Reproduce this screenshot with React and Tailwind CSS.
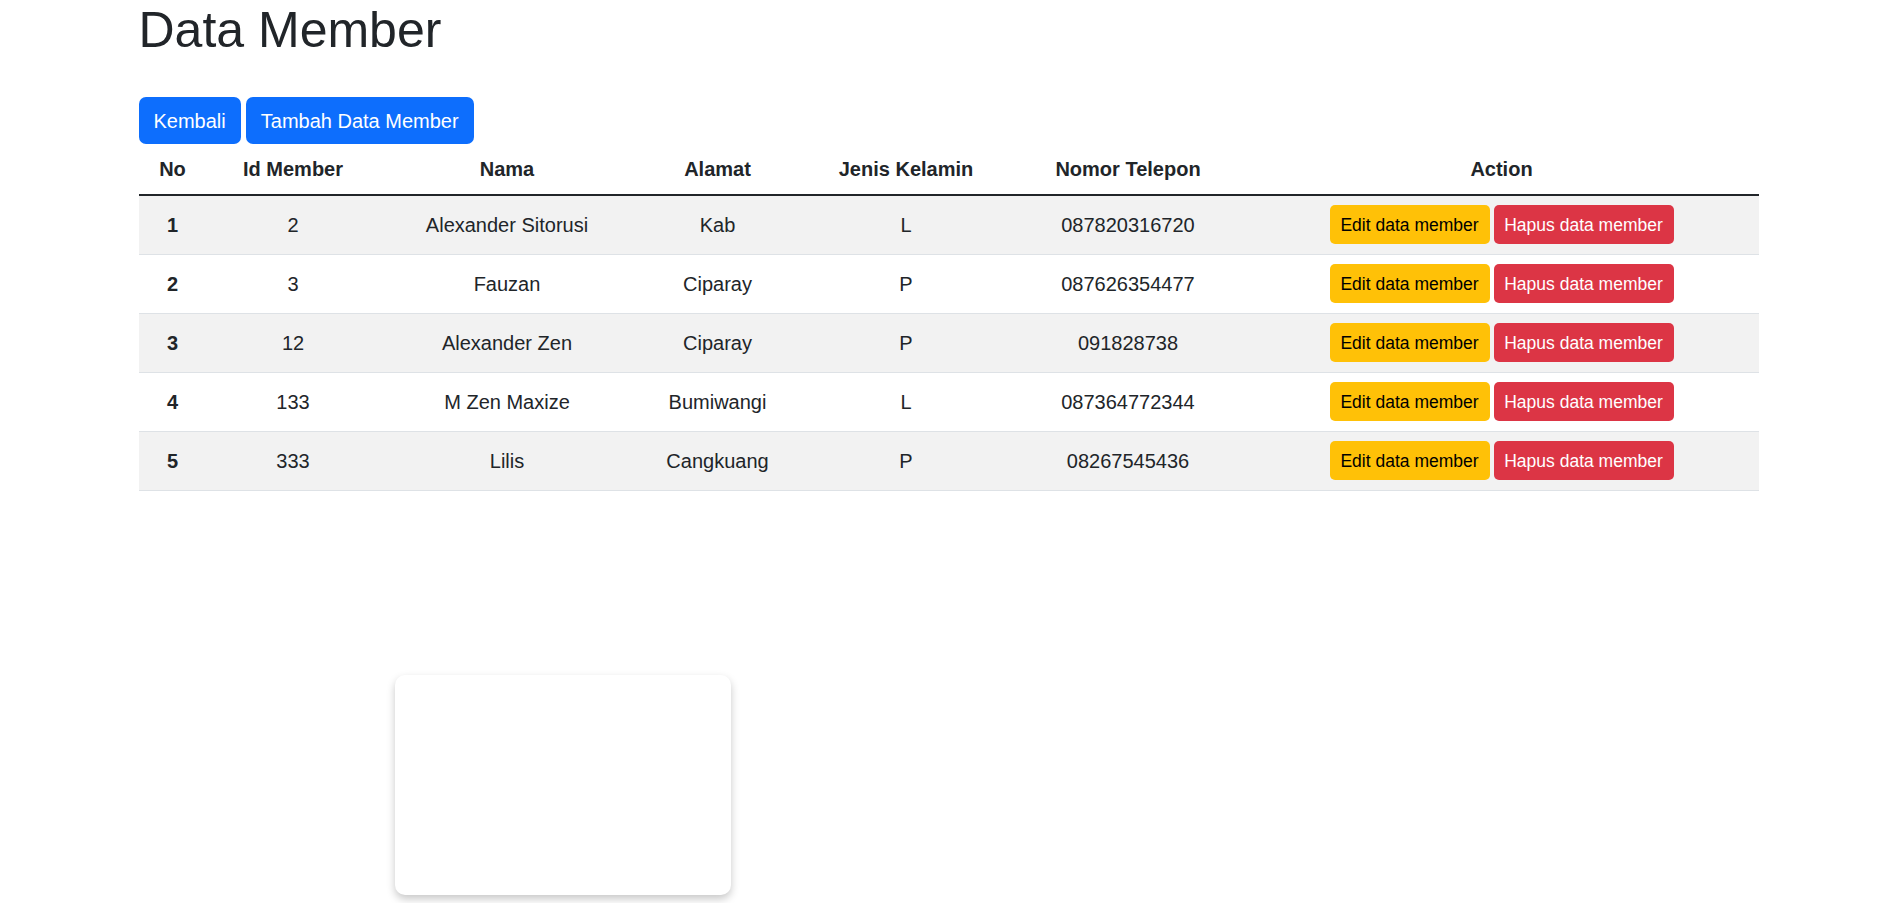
/**
 * Data Member page
 *
 * @description Member list table with edit / delete actions
 */

import React from 'react';

const MEMBERS = [
  { no: 1, id: '2', nama: 'Alexander Sitorusi', alamat: 'Kab', jk: 'L', telp: '087820316720' },
  { no: 2, id: '3', nama: 'Fauzan', alamat: 'Ciparay', jk: 'P', telp: '087626354477' },
  { no: 3, id: '12', nama: 'Alexander Zen', alamat: 'Ciparay', jk: 'P', telp: '091828738' },
  { no: 4, id: '133', nama: 'M Zen Maxize', alamat: 'Bumiwangi', jk: 'L', telp: '087364772344' },
  { no: 5, id: '333', nama: 'Lilis', alamat: 'Cangkuang', jk: 'P', telp: '08267545436' },
];

const HEADERS = ['No', 'Id Member', 'Nama', 'Alamat', 'Jenis Kelamin', 'Nomor Telepon', 'Action'];

function App() {
  return (
    <div className="relative min-h-[903px] bg-white text-[#212529] font-['Liberation_Sans',Arial,sans-serif] text-[20px] leading-[30px]">
      <div className="mx-auto w-[1650px] px-[15px]">
        <h1 className="text-[50px] leading-[60px] font-normal">Data Member</h1>

        {/* Top buttons */}
        <div className="flex gap-[5px] mt-[37px]">
          <button className="h-[47px] px-[15px] rounded-[7px] bg-[#0d6efd] text-white text-[20px]">
            Kembali
          </button>
          <button className="h-[47px] px-[15px] rounded-[7px] bg-[#0d6efd] text-white text-[20px]">
            Tambah Data Member
          </button>
        </div>

        {/* Table */}
        <table className="w-[1620px] table-fixed border-collapse text-center">
          <colgroup>
            <col className="w-[68px]" />
            <col className="w-[173px]" />
            <col className="w-[255px]" />
            <col className="w-[166px]" />
            <col className="w-[211px]" />
            <col className="w-[233px]" />
            <col className="w-[514px]" />
          </colgroup>
          <thead>
            <tr className="h-[51px] border-b-2 border-[#212529]">
              {HEADERS.map((h) => (
                <th key={h} className="px-[10px] font-bold align-middle">{h}</th>
              ))}
            </tr>
          </thead>
          <tbody>
            {MEMBERS.map((m, i) => (
              <tr
                key={m.no}
                className={`h-[59px] border-b border-[#dee2e6] ${i % 2 === 0 ? 'bg-[#f2f2f2]' : 'bg-white'}`}
              >
                <td className="px-[10px] font-bold align-middle">{m.no}</td>
                <td className="px-[10px] align-middle">{m.id}</td>
                <td className="px-[10px] align-middle">{m.nama}</td>
                <td className="px-[10px] align-middle">{m.alamat}</td>
                <td className="px-[10px] align-middle">{m.jk}</td>
                <td className="px-[10px] align-middle">{m.telp}</td>
                <td className="px-[10px] align-middle">
                  <div className="flex justify-center gap-[4px]">
                    <button className="w-[160px] h-[39px] rounded-[5px] bg-[#ffc107] text-black text-[17.5px]">
                      Edit data member
                    </button>
                    <button className="w-[180px] h-[39px] rounded-[5px] bg-[#dc3545] text-white text-[17.5px]">
                      Hapus data member
                    </button>
                  </div>
                </td>
              </tr>
            ))}
          </tbody>
        </table>
      </div>

      {/* Floating empty card */}
      <div className="absolute left-[395px] top-[675px] w-[336px] h-[220px] rounded-[10px] bg-white shadow-[0_4px_8px_rgba(0,0,0,0.22)]" />
    </div>
  );
}

export default App;
